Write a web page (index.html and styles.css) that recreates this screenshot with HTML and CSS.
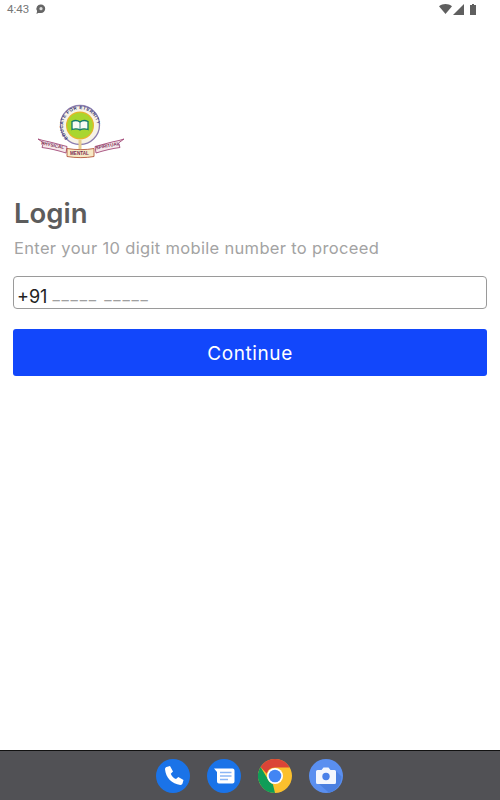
FILE: index.html
```html
<!DOCTYPE html>
<html lang="en">
<head>
    <meta charset="UTF-8">
    <meta name="viewport" content="width=device-width, initial-scale=1.0">
    <title>Login</title>
    <link rel="stylesheet" href="styles.css">
</head>
<body>

<!-- Status Bar -->
<div class="status-bar">
    <div class="status-left">
        <span class="clock">4:43</span>
        <svg width="12" height="12" viewBox="0 0 12 12"><path d="M6 1.500a4.200 4.200 0 0 1 4.200 4.200A4.200 4.200 0 0 1 6 9.900H3.200L1.500 11l.6-3A4.200 4.200 0 0 1 6 1.500z" fill="#666"/><circle cx="6" cy="5.700" r="1.600" fill="#ddd"/></svg>
    </div>
    <div class="status-right">
        <svg width="13" height="10" viewBox="0 0 13 10"><path d="M0 2.200C3.600-.7 9.400-.7 13 2.200L6.500 10z" fill="#5f5f5f"/></svg>
        <svg width="11" height="11" viewBox="0 0 11 11"><path d="M11 0v11H0z" fill="#5f5f5f"/></svg>
        <svg class="battery" width="6" height="11" viewBox="0 0 6 11"><path d="M2 0h2v1h2v10H0V1h2z" fill="#5f5f5f"/></svg>
    </div>
</div>

<!-- Login Form -->
<div class="content">
    <svg class="logo" width="88" height="56" viewBox="0 0 88 56">
        <defs>
            <path id="ring-text" d="M32.500 36.500A17 17 0 1 1 53.500 36.500"/>
        </defs>
        <circle cx="43" cy="22" r="19.500" fill="#f7f3e6" stroke="#8c7fb0" stroke-width="1.300"/>
        <text class="ring-label"><textPath href="#ring-text" startOffset="2">EDUCATE FOR ETERNITY</textPath></text>
        <circle cx="43" cy="22.500" r="14" fill="#e6b52a"/>
        <circle cx="43" cy="22.500" r="12.800" fill="#a9d62f"/>
        <path d="M35 18.500c3-1.500 6-1 8 .5 2-1.500 5-2 8-.5v8c-3-1-6-.8-8 .5-2-1.300-5-1.500-8-.5z" fill="#f8fbf4" stroke="#127a6a" stroke-width="1.300"/>
        <path d="M43 19v8" stroke="#127a6a" stroke-width=".8"/>
        <path d="M41.500 37h3v9h-3z" fill="#e8cf8e"/>
        <path d="M1 36l5 1.500c8 1.500 16 4 24 6l-1 6.500c-8-2.500-16-4.500-24-5.500l1.500-4.500z" fill="#f6e7ea" stroke="#a34a78" stroke-width=".9"/>
        <path d="M87 36l-5 1.500c-8 1.500-16 4-24 6l1 6.500c8-2.500 16-4.500 24-5.500l-1.500-4.500z" fill="#f6e7ea" stroke="#a34a78" stroke-width=".9"/>
        <path d="M30 45.500c9 1.500 19 1.500 27 0v8c-8 1.500-18 1.500-27 0z" fill="#f7e9c4" stroke="#b3583c" stroke-width=".9"/>
        <text class="ribbon-label" x="4" y="41.500" transform="rotate(11 4 41.500)">PHYSICAL</text>
        <text class="ribbon-label" x="59" y="46.500" transform="rotate(-11 59 46.500)">SPIRITUAL</text>
        <text class="ribbon-label" x="33" y="52">MENTAL</text>
    </svg>

    <h1>Login</h1>
    <p class="hint">Enter your 10 digit mobile number to proceed</p>

    <div class="phone-input">
        <span class="prefix">+91</span>
        <span class="mask">_____ _____</span>
    </div>

    <button class="continue-btn">Continue</button>
</div>

<!-- Dock -->
<div class="dock">
    <svg width="34" height="34" viewBox="0 0 34 34">
        <circle cx="17" cy="17" r="17" fill="#1a73e8"/>
        <path d="M10.500 8l3.500-1 3 5.500-2.200 2.200c.9 2.300 2.800 4.300 5.200 5.400l2.300-2.200 5.200 3-.9 3.400c-.3 1-1.200 1.700-2.300 1.600C16 25.200 9.800 18.800 9 10.300c0-1 .6-2 1.500-2.300z" fill="#fff"/>
    </svg>
    <svg width="34" height="34" viewBox="0 0 34 34">
        <circle cx="17" cy="17" r="17" fill="#1a73e8"/>
        <path d="M7 9.500h18.500a2 2 0 0 1 2 2v11a2 2 0 0 1-2 2H12a2 2 0 0 1-2-2v-9.500z" fill="#fff"/>
        <path d="M13 13.500h11.500M13 17h11.500M13 20.500h8" stroke="#8ab6f5" stroke-width="1.700"/>
    </svg>
    <svg width="34" height="34" viewBox="0 0 34 34">
        <circle cx="17" cy="17" r="17" fill="#fbc02d"/>
        <path d="M17 0a17 17 0 0 1 14.700 8.500H17a8.500 8.500 0 0 0-8.200 6.300L2.600 8A17 17 0 0 1 17 0z" fill="#db4437"/>
        <path d="M2.600 8l7 11.800a8.500 8.500 0 0 0 5.300 5.400L17 34A17 17 0 0 1 2.600 8z" fill="#0f9d58"/>
        <circle cx="17" cy="17" r="8" fill="#fff"/>
        <circle cx="17" cy="17" r="6.300" fill="#4285f4"/>
    </svg>
    <svg width="34" height="34" viewBox="0 0 34 34">
        <circle cx="17" cy="17" r="17" fill="#5a8ff0"/>
        <path d="M27 12l5.500 5.500A17 17 0 0 1 20 33.700L10 25z" fill="#4a7fe0"/>
        <path d="M8.500 11h4l2-2.500h5l2 2.500h4a1.500 1.500 0 0 1 1.500 1.500v11a1.500 1.500 0 0 1-1.500 1.500h-17A1.500 1.500 0 0 1 7 23.500v-11A1.500 1.500 0 0 1 8.500 11z" fill="#f3f6fd"/>
        <circle cx="17" cy="17.500" r="3.700" fill="#4a80e8"/>
    </svg>
</div>

</body>
</html>
```

FILE: styles.css
```css
/* Basic Reset */
* {
    margin: 0;
    padding: 0;
    box-sizing: border-box;
}

body {
    font-family: Inter, 'Noto Sans', Arial, sans-serif;
    background-color: white;
    display: flex;
    flex-direction: column;
    height: 800px;
    overflow: hidden;
}

/* Status Bar */
.status-bar {
    height: 20px;
    display: flex;
    justify-content: space-between;
    align-items: center;
    padding: 0 24px 2px 7px;
    flex-shrink: 0;
}

.status-left {
    display: flex;
    align-items: center;
    gap: 6px;
}

.clock {
    font-family: Roboto, Arial, sans-serif;
    font-size: 11.500px;
    color: #777;
}

.status-right {
    display: flex;
    align-items: center;
    gap: 1px;
}

.battery {
    margin-left: 5px;
}

/* Login Form */
.content {
    flex: 1;
    display: flex;
    flex-direction: column;
    padding: 83px 13px 0;
}

.logo {
    margin-left: 24px;
}

.ring-label {
    font-family: 'Liberation Sans', Arial, sans-serif;
    font-size: 4.600px;
    font-weight: bold;
    letter-spacing: .4px;
    fill: #3c3a78;
}

.ribbon-label {
    font-family: 'Liberation Sans', Arial, sans-serif;
    font-size: 4.600px;
    font-weight: bold;
    fill: #7a2e55;
}

h1 {
    font-size: 27.500px;
    font-weight: 600;
    color: #5c5c5c;
    line-height: 34px;
    margin: 37px 0 0 1px;
}

.hint {
    font-size: 16.500px;
    letter-spacing: .33px;
    color: #a3a3a3;
    line-height: 22px;
    margin: 7px 0 0 1px;
}

.phone-input {
    height: 33px;
    border: 1px solid #9a9a9a;
    border-radius: 4px;
    margin-top: 17px;
    padding: 8px 3px 0;
    display: flex;
    align-items: center;
    gap: 5px;
    font-size: 18px;
}

.prefix {
    color: #222;
}

.mask {
    color: #a0a0a0;
    font-size: 16px;
    letter-spacing: 1.800px;
    margin-bottom: 6px;
}

.continue-btn {
    height: 47px;
    margin-top: 20px;
    padding-top: 2px;
    background-color: #1247fb;
    color: white;
    border: none;
    border-radius: 3px;
    font-family: inherit;
    font-size: 19px;
    letter-spacing: .6px;
}

/* Dock */
.dock {
    height: 50px;
    flex-shrink: 0;
    background-color: #515155;
    border-top: 1px solid #111;
    display: flex;
    justify-content: center;
    align-items: center;
    gap: 17px;
    padding-right: 2px;
}
```
